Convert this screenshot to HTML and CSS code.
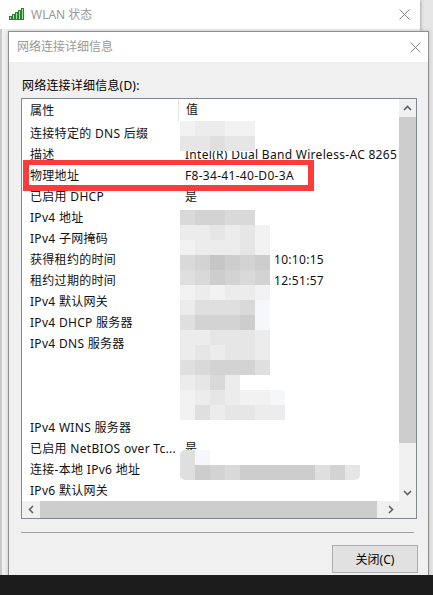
FILE: index.html
```html
<!DOCTYPE html>
<html lang="zh-CN">
<head>
<meta charset="utf-8">
<title>网络连接详细信息</title>
<link rel="stylesheet" href="styles.css">
</head>
<body>
<div class="screen">
  <div class="wlan">
    <div class="wlan-title">
      <svg class="signal" width="16" height="12" viewBox="0 0 16 12">
        <rect x="0.5" y="8.5" width="2" height="3" />
        <rect x="3.5" y="6.5" width="2" height="5" />
        <rect x="6.5" y="4.5" width="2" height="7" />
        <rect x="9.5" y="2.5" width="2" height="9" />
        <rect x="12.5" y="0.5" width="2" height="11" />
      </svg>
      <span class="wlan-text">WLAN 状态</span>
      <svg class="close-x" width="11" height="11" viewBox="0 0 11 11"><path d="M0.5 0.5 L10.5 10.5 M10.5 0.5 L0.5 10.5"/></svg>
    </div>
    <div class="wlan-body"></div>
  </div>

  <div class="dialog">
    <div class="dlg-title">
      <span class="dlg-text">网络连接详细信息</span>
      <svg class="close-x" width="11" height="11" viewBox="0 0 11 11"><path d="M0.5 0.5 L10.5 10.5 M10.5 0.5 L0.5 10.5"/></svg>
    </div>
    <div class="dlg-body">
      <div class="label">网络连接详细信息(D):</div>
      <div class="listbox">
        <div class="list-main">
          <div class="list-view">
            <div class="row head"><div class="c1">属性</div><div class="c2">值</div></div>
            <div class="row"><div class="c1">连接特定的 DNS 后缀</div><div class="c2"></div></div>
            <div class="row"><div class="c1">描述</div><div class="c2">Intel(R) Dual Band Wireless-AC 8265</div></div>
            <div class="row"><div class="c1">物理地址</div><div class="c2">F8-34-41-40-D0-3A</div></div>
            <div class="row"><div class="c1">已启用 DHCP</div><div class="c2">是</div></div>
            <div class="row"><div class="c1">IPv4 地址</div><div class="c2"></div></div>
            <div class="row"><div class="c1">IPv4 子网掩码</div><div class="c2"></div></div>
            <div class="row"><div class="c1">获得租约的时间</div><div class="c2"><span class="date"></span>10:10:15</div></div>
            <div class="row"><div class="c1">租约过期的时间</div><div class="c2"><span class="date"></span>12:51:57</div></div>
            <div class="row"><div class="c1">IPv4 默认网关</div><div class="c2"></div></div>
            <div class="row"><div class="c1">IPv4 DHCP 服务器</div><div class="c2"></div></div>
            <div class="row"><div class="c1">IPv4 DNS 服务器</div><div class="c2"></div></div>
            <div class="row"><div class="c1"></div><div class="c2"></div></div>
            <div class="row"><div class="c1"></div><div class="c2"></div></div>
            <div class="row"><div class="c1"></div><div class="c2"></div></div>
            <div class="row"><div class="c1">IPv4 WINS 服务器</div><div class="c2"></div></div>
            <div class="row"><div class="c1">已启用 NetBIOS over Tc...</div><div class="c2">是</div></div>
            <div class="row"><div class="c1">连接-本地 IPv6 地址</div><div class="c2"></div></div>
            <div class="row"><div class="c1">IPv6 默认网关</div><div class="c2"></div></div>
          </div>
          <div class="vscroll">
            <div class="sbtn"><svg width="9" height="6" viewBox="0 0 9 6"><path d="M1 5 L4.5 1.5 L8 5"/></svg></div>
            <div class="vtrack"><div class="vthumb"></div></div>
            <div class="sbtn"><svg width="9" height="6" viewBox="0 0 9 6"><path d="M1 1 L4.5 4.5 L8 1"/></svg></div>
          </div>
        </div>
        <div class="hscroll-row">
          <div class="hscroll">
            <div class="sbtn h"><svg width="6" height="9" viewBox="0 0 6 9"><path d="M5 1 L1.5 4.5 L5 8"/></svg></div>
            <div class="htrack"><div class="hthumb"></div></div>
            <div class="sbtn h"><svg width="6" height="9" viewBox="0 0 6 9"><path d="M1 1 L4.5 4.5 L1 8"/></svg></div>
          </div>
          <div class="corner"></div>
        </div>

        <div class="mosaic m-dns">
          <i class="a"></i><i class="b"></i><i class="b"></i><i class="a"></i><i class="a"></i>
          <i class="c"></i><i class="c"></i><i class="d"></i><i class="c"></i><i class="c"></i>
        </div>
        <div class="mosaic m-ip">
          <i class="e"></i><i class="f"></i><i class="f"></i><i class="e"></i><i class="e"></i><i></i><i></i>
          <i class="b"></i><i class="b"></i><i class="c"></i><i class="b"></i><i class="c"></i><i class="a"></i><i></i>
          <i class="a"></i><i class="b"></i><i class="b"></i><i class="b"></i><i class="c"></i><i class="a"></i><i></i>
          <i class="e"></i><i class="f"></i><i class="h"></i><i class="g"></i><i class="f"></i><i class="g"></i><i></i>
          <i class="d"></i><i class="e"></i><i class="g"></i><i class="f"></i><i class="e"></i><i class="f"></i><i></i>
          <i class="a"></i><i class="b"></i><i class="a"></i><i class="b"></i><i class="b"></i><i class="a"></i><i></i>
          <i class="b"></i><i class="d"></i><i class="d"></i><i class="d"></i><i class="e"></i><i class="w"></i><i></i>
          <i class="d"></i><i class="f"></i><i class="f"></i><i class="f"></i><i class="g"></i><i class="w"></i><i></i>
          <i class="b"></i><i class="b"></i><i class="c"></i><i class="c"></i><i class="c"></i><i class="b"></i><i></i>
          <i class="b"></i><i class="c"></i><i class="b"></i><i class="c"></i><i class="c"></i><i class="b"></i><i></i>
          <i class="d"></i><i class="e"></i><i class="f"></i><i class="f"></i><i class="f"></i><i class="d"></i><i></i>
          <i class="b"></i><i class="c"></i><i class="e"></i><i class="b"></i><i></i><i></i><i></i>
          <i class="a"></i><i class="b"></i><i class="c"></i><i class="b"></i><i class="a"></i><i class="a"></i><i class="w"></i>
          <i class="a"></i><i class="d"></i><i class="b"></i><i class="c"></i><i class="c"></i><i class="b"></i><i class="b"></i>
        </div>
        <div class="mosaic m-v6">
          <i class="d"></i><i class="w"></i><i></i><i></i><i></i><i></i><i></i><i></i><i></i><i></i><i></i><i></i>
          <i class="d"></i><i class="g"></i><i class="f"></i><i class="e"></i><i class="g"></i><i class="g"></i><i class="g"></i><i class="g"></i><i class="g"></i><i class="d"></i><i class="f"></i><i class="c"></i>
        </div>
        <div class="mark"></div>
      </div>
      <div class="sep"></div>
      <div class="footer"><button class="btn" type="button">关闭(C)</button></div>
    </div>
  </div>
  <div class="taskbar"></div>
</div>
</body>
</html>
```
FILE: styles.css
```css
* { box-sizing: border-box; }

body {
  margin: 0;
  width: 433px;
  height: 595px;
  overflow: hidden;
  font-family: "Noto Sans", "Noto Sans CJK SC", sans-serif;
  font-size: 12px;
  color: #000;
}

.screen {
  position: relative;
  width: 433px;
  height: 595px;
  background: #e6e6e6;
  overflow: hidden;
}

/* background window */
.wlan {
  position: absolute;
  left: 0;
  top: 0;
  width: 420px;
  height: 575px;
  display: flex;
  flex-direction: column;
  box-shadow: 1px 0 3px rgba(0,0,0,0.25);
}
.wlan-title {
  height: 29px;
  background: #fff;
  display: flex;
  align-items: center;
  padding: 0 10px 0 9px;
}
.signal rect { fill: #9ee59e; stroke: #2f7d2f; stroke-width: 1; }
.signal { margin-top: -2px; }
.wlan-text {
  margin-left: 6px;
  color: #9a9a9a;
  font-size: 12px;
  line-height: 16px;
  flex: 1;
}
.close-x path { stroke: #8a8a8a; stroke-width: 1; fill: none; }
.wlan-body {
  flex: 1;
  background: #f0f0f0;
  border-left: 2px solid #c9c9c9;
}

/* dialog */
.dialog {
  position: absolute;
  left: 8px;
  top: 31px;
  width: 421px;
  height: 560px;
  border: 1px solid #8f8f8f;
  display: flex;
  flex-direction: column;
  background: #f0f0f0;
  box-shadow: 0 0 4px rgba(0,0,0,0.2);
}
.dlg-title {
  height: 30px;
  background: #fff;
  display: flex;
  align-items: center;
  padding: 0 7px 0 8px;
}
.dlg-text {
  flex: 1;
  color: #999;
  font-size: 12px;
  line-height: 16px;
}
.dlg-body {
  flex: 1;
  display: flex;
  flex-direction: column;
  padding: 16px 11px 0 12px;
}
.label {
  line-height: 16px;
  padding-left: 1px;
  margin-bottom: 4px;
  letter-spacing: 0.2px;
}

/* list box */
.listbox {
  position: relative;
  width: 396px;
  height: 421px;
  border: 1px solid #828790;
  background: #fff;
  display: flex;
  flex-direction: column;
}
.list-main {
  flex: 1;
  display: flex;
  min-height: 0;
}
.list-view {
  flex: 1;
  overflow: hidden;
  letter-spacing: 0.3px;
  color: #111;
}
.row {
  display: flex;
  height: 21px;
  line-height: 21px;
  white-space: nowrap;
}
.row.head {
  height: 24px;
  line-height: 24px;
}
.c1 {
  width: 156px;
  padding-left: 8px;
  overflow: hidden;
}
.c2 {
  flex: 1;
  padding-left: 7px;
}
.head .c2 {
  border-left: 1px solid #e5e5e5;
  margin: 0 0 2px;
  line-height: 22px;
}
.date {
  display: inline-block;
  width: 89px;
}

.vscroll {
  width: 17px;
  background: #f0f0f0;
  display: flex;
  flex-direction: column;
}
.sbtn {
  height: 17px;
  width: 17px;
  display: flex;
  align-items: center;
  justify-content: center;
}
.sbtn path { stroke: #606060; stroke-width: 1.6; fill: none; }
.vtrack { flex: 1; padding-top: 1px; }
.vthumb {
  width: 17px;
  height: 326px;
  background: #cdcdcd;
}
.hscroll-row {
  height: 17px;
  display: flex;
}
.hscroll {
  flex: 1;
  display: flex;
  background: #f0f0f0;
}
.htrack { flex: 1; padding-left: 1px; }
.hthumb {
  width: 337px;
  height: 17px;
  background: #cdcdcd;
}
.corner {
  width: 17px;
  background: #f0f0f0;
}

/* pixelated (obscured) values */
.mosaic {
  position: absolute;
  display: grid;
  grid-auto-rows: 15px;
}
.mosaic i { display: block; }
.m-dns { left: 158px; top: 22px; grid-template-columns: repeat(5, 15px); }
.m-ip { left: 158px; top: 111px; grid-template-columns: repeat(7, 15px); }
.m-v6 { left: 158px; top: 351px; grid-template-columns: repeat(12, 15px); border-radius: 5px; overflow: hidden; }
.mosaic .w { background: #f5f7fa; }
.mosaic .a { background: #f2f2f2; }
.mosaic .b { background: #ececec; }
.mosaic .c { background: #e6e6e6; }
.mosaic .d { background: #dfdfdf; }
.mosaic .e { background: #d9d9d9; }
.mosaic .f { background: #d3d3d3; }
.mosaic .g { background: #cdcdcd; }
.mosaic .h { background: #c6c6c6; }

/* annotation */
.mark {
  position: absolute;
  left: 1px;
  top: 61px;
  width: 291px;
  height: 31px;
  border: 6px solid #fc3b3b;
  border-top-width: 5px;
}

.sep {
  margin-top: 13px;
  width: 393px;
  height: 1px;
  background: #a0a0a0;
}
.footer {
  display: flex;
  justify-content: flex-end;
  padding-top: 12px;
}
.btn {
  width: 86px;
  height: 28px;
  margin-right: -1px;
  background: #e1e1e1;
  border: 1px solid #adadad;
  font-family: "Noto Sans", "Noto Sans CJK SC", sans-serif;
  font-size: 12px;
  color: #000;
  padding: 0;
}

.taskbar {
  position: absolute;
  left: 0;
  right: 0;
  bottom: 0;
  height: 20px;
  background: #1c1c1c;
}
```
